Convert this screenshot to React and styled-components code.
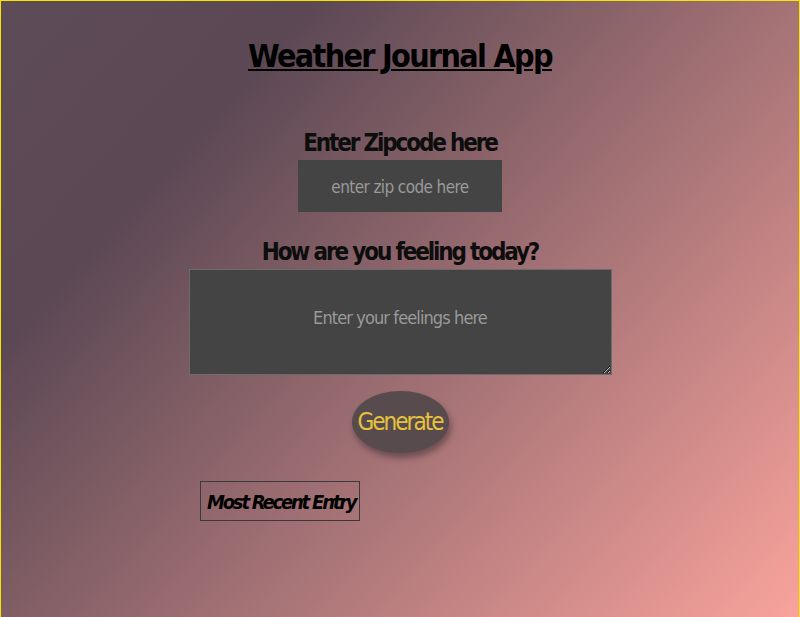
import React from 'react';
import styled, { createGlobalStyle } from 'styled-components';

const GlobalStyle = createGlobalStyle`
  html, body {
    margin: 0;
    padding: 0;
  }
  body {
    font-family: "DejaVu Sans Condensed", "Liberation Sans", sans-serif;
  }
`;

const Page = styled.main`
  box-sizing: border-box;
  min-height: 100vh;
  border: 1px solid #f5e600;
  border-bottom: 0;
  background: linear-gradient(132deg, #5e4b58 0%, #5b4854 23%, #f9a39c 100%);
  display: flex;
  flex-direction: column;
  align-items: center;
  color: #000;
`;

const Title = styled.h1`
  margin: 36px 0 0;
  font-size: 32px;
  font-weight: 700;
  line-height: 38px;
  letter-spacing: -1.7px;
  text-decoration: underline;
  text-decoration-thickness: 2px;
  text-underline-offset: 2px;
`;

const Form = styled.section`
  display: flex;
  flex-direction: column;
  align-items: center;
  margin-top: 53px;
`;

const Label = styled.label`
  display: block;
  font-size: 24px;
  font-weight: 700;
  line-height: 30px;
  letter-spacing: -2.15px;
  color: #0d0d0d;
  margin-top: ${props => props.$top || 0}px;
`;

const ZipInput = styled.input`
  box-sizing: border-box;
  width: 204px;
  height: 52px;
  margin-top: 2px;
  padding-top: 3px;
  border: none;
  background: #444444;
  color: #ddd;
  font-family: inherit;
  font-size: 17px;
  letter-spacing: -0.6px;
  text-align: center;
  outline: none;
  &::placeholder {
    color: #9a9a9a;
  }
`;

const Feelings = styled.textarea`
  box-sizing: border-box;
  width: 423px;
  height: 106px;
  margin-top: 2px;
  padding: 37px 8px 0;
  border: 1px solid #6c6c6c;
  background: #444444;
  color: #ddd;
  font-family: inherit;
  font-size: 18px;
  letter-spacing: -0.9px;
  text-align: center;
  outline: none;
  &::placeholder {
    color: #9a9a9a;
  }
`;

const GenerateButton = styled.button`
  width: 97px;
  height: 62px;
  margin-top: 16px;
  padding: 0;
  border: none;
  border-radius: 50%;
  background: #584b4d;
  color: #e6c23d;
  font-family: inherit;
  font-size: 24px;
  letter-spacing: -2px;
  box-shadow: 2px 5px 6px rgba(40, 30, 35, 0.45);
  cursor: pointer;
`;

const EntryHolder = styled.section`
  width: 400px;
  margin-top: 28px;
`;

const EntryTitle = styled.div`
  display: inline-block;
  box-sizing: border-box;
  height: 40px;
  padding: 0 4px 0 6px;
  border: 1px solid #3a3a3a;
  font-size: 20px;
  font-weight: 700;
  font-style: italic;
  line-height: 40px;
  letter-spacing: -2.2px;
`;

export default function App() {
  return (
    <>
      <GlobalStyle />
      <Page>
        <Title>Weather Journal App</Title>
        <Form>
          <Label htmlFor="zip">Enter Zipcode here</Label>
          <ZipInput id="zip" type="text" placeholder="enter zip code here" />
          <Label htmlFor="feelings" $top={25}>How are you feeling today?</Label>
          <Feelings id="feelings" placeholder="Enter your feelings here" />
          <GenerateButton id="generate">Generate</GenerateButton>
        </Form>
        <EntryHolder>
          <EntryTitle>Most Recent Entry</EntryTitle>
        </EntryHolder>
      </Page>
    </>
  );
}
